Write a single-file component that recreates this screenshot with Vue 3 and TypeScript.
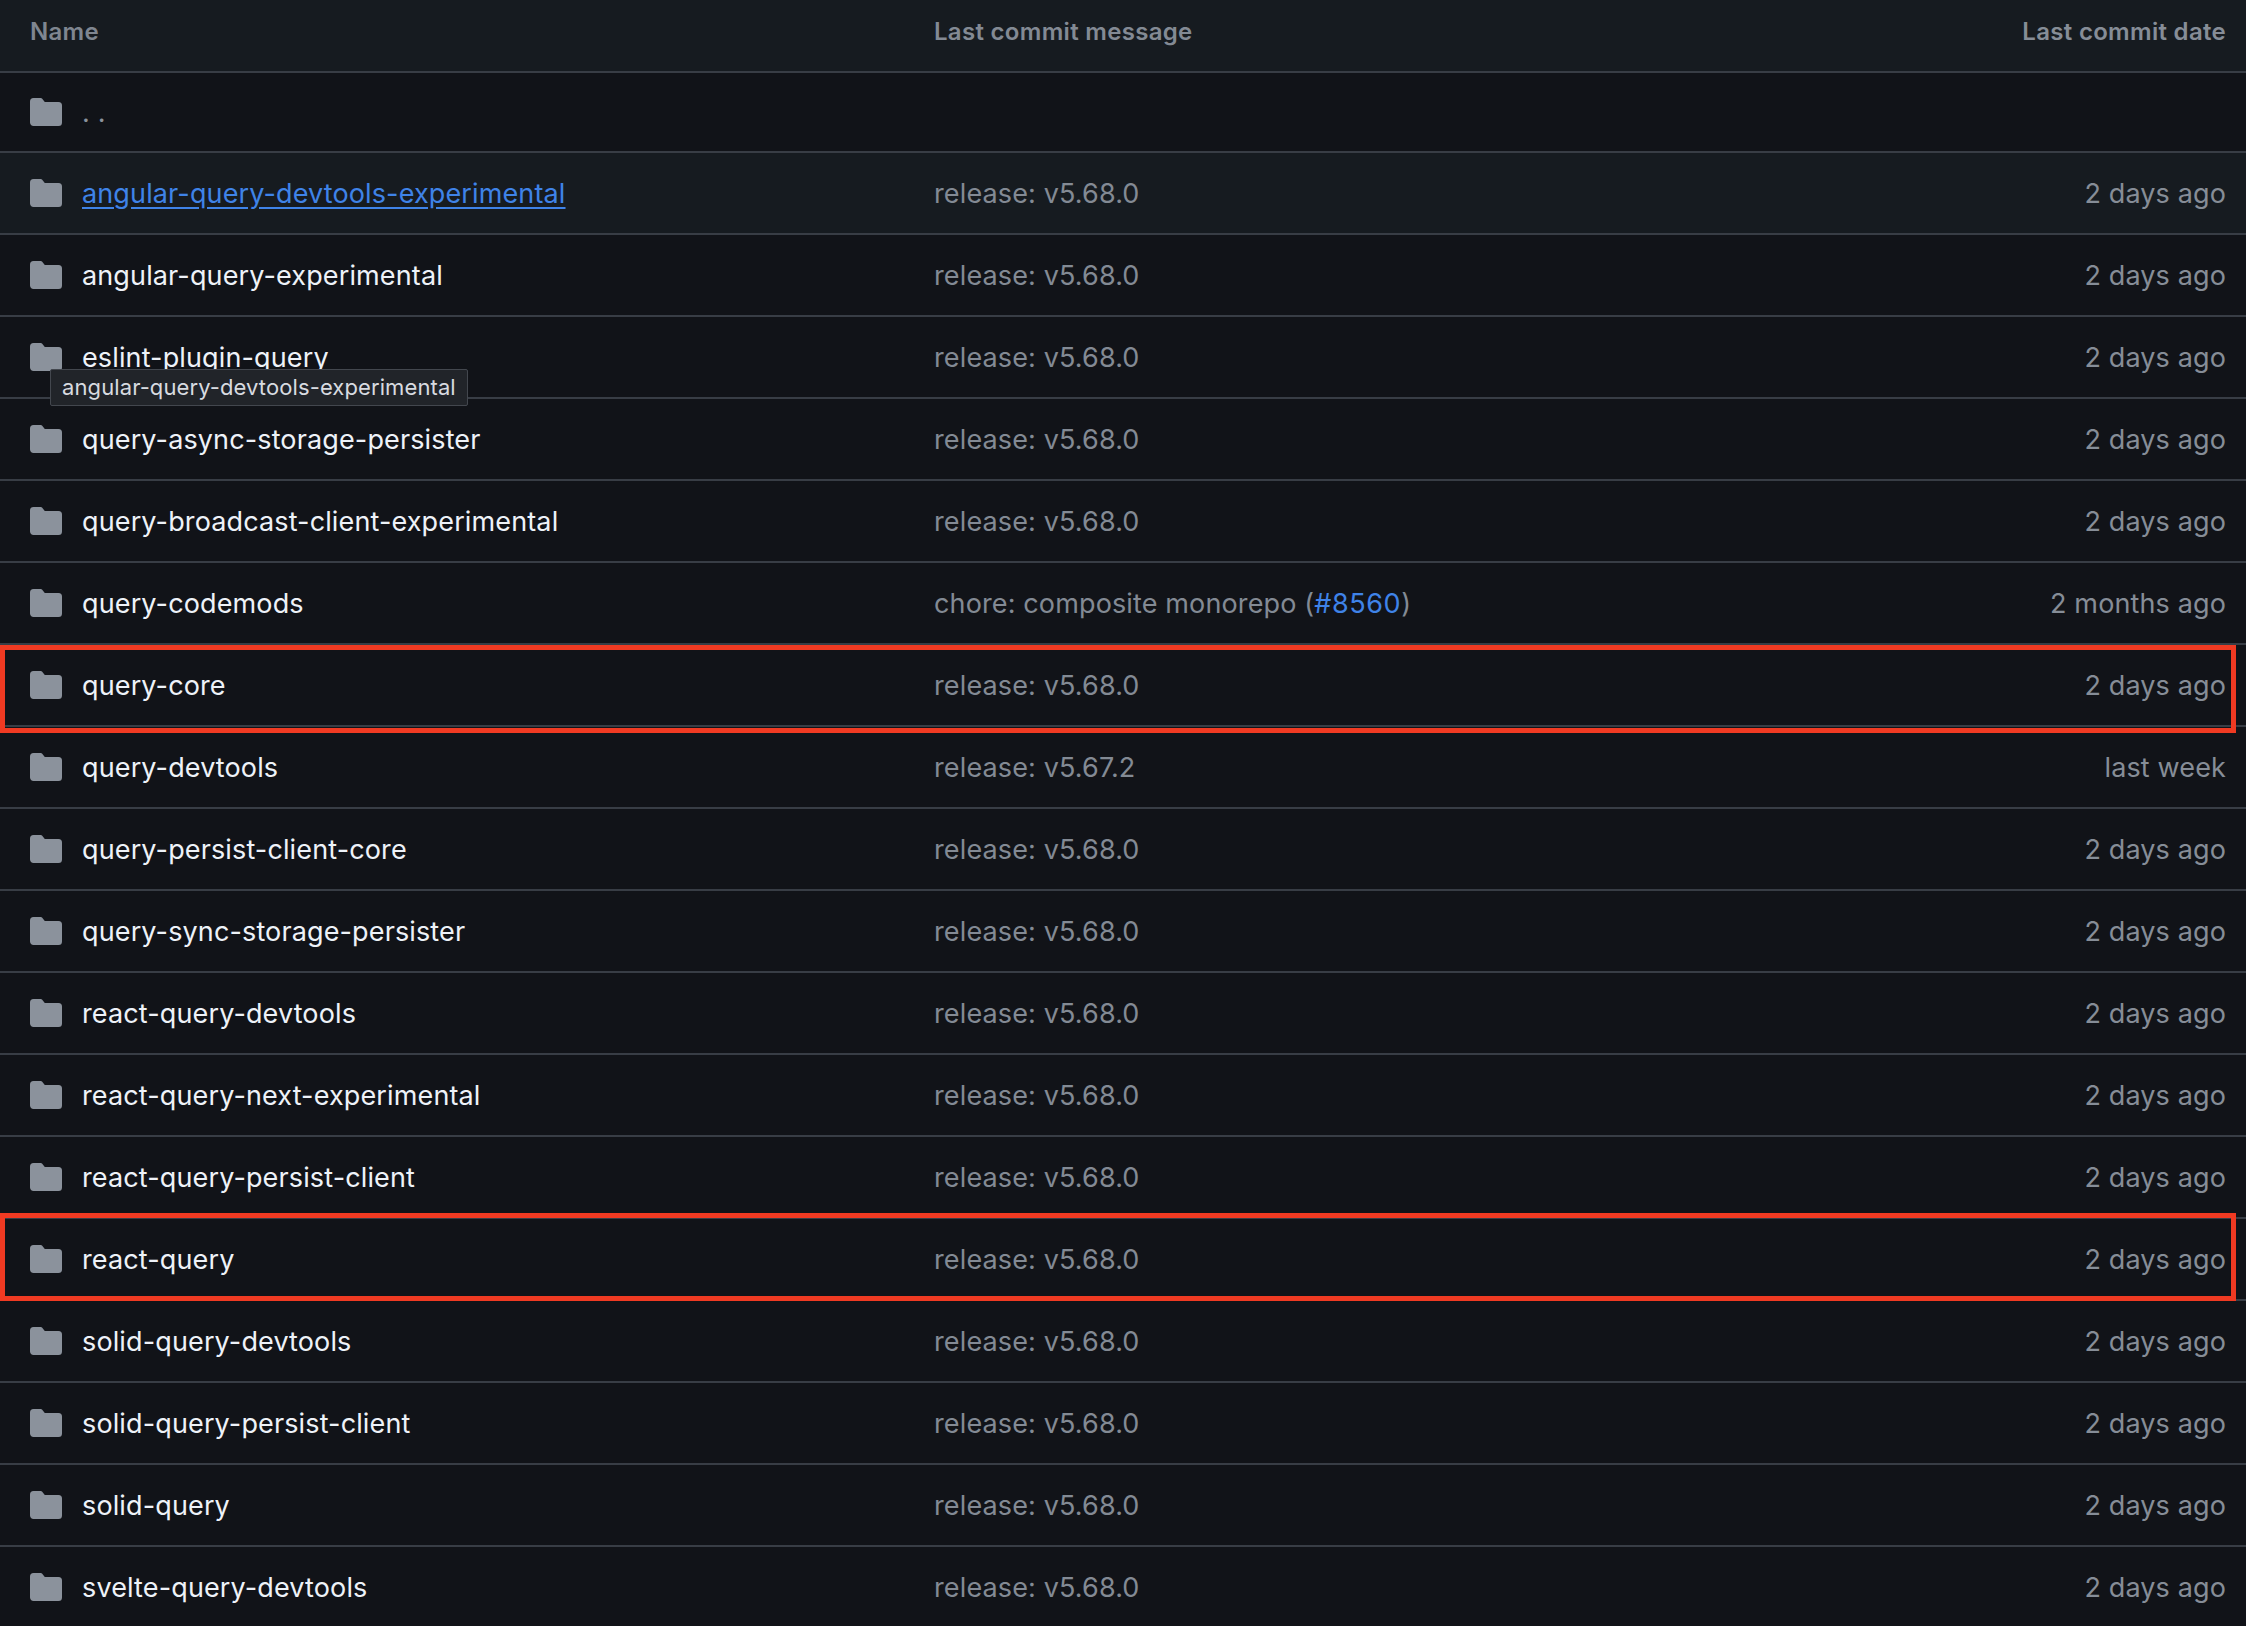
<script setup lang="ts">
interface Row {
  name: string;
  message?: string;
  issue?: string;
  date?: string;
  hovered?: boolean;
  marked?: boolean;
  markedUp?: boolean;
}

const release = 'release: v5.68.0';
const recent = '2 days ago';

const rows: Row[] = [
  { name: '. .' },
  { name: 'angular-query-devtools-experimental', message: release, date: recent, hovered: true },
  { name: 'angular-query-experimental', message: release, date: recent },
  { name: 'eslint-plugin-query', message: release, date: recent },
  { name: 'query-async-storage-persister', message: release, date: recent },
  { name: 'query-broadcast-client-experimental', message: release, date: recent },
  { name: 'query-codemods', message: 'chore: composite monorepo (', issue: '#8560', date: '2 months ago' },
  { name: 'query-core', message: release, date: recent, marked: true },
  { name: 'query-devtools', message: 'release: v5.67.2', date: 'last week' },
  { name: 'query-persist-client-core', message: release, date: recent },
  { name: 'query-sync-storage-persister', message: release, date: recent },
  { name: 'react-query-devtools', message: release, date: recent },
  { name: 'react-query-next-experimental', message: release, date: recent },
  { name: 'react-query-persist-client', message: release, date: recent },
  { name: 'react-query', message: release, date: recent, marked: true, markedUp: true },
  { name: 'solid-query-devtools', message: release, date: recent },
  { name: 'solid-query-persist-client', message: release, date: recent },
  { name: 'solid-query', message: release, date: recent },
  { name: 'svelte-query-devtools', message: release, date: recent },
];
</script>

<template>
  <div class="table">
    <div class="head">
      <span class="col-name">Name</span>
      <span class="col-msg">Last commit message</span>
      <span class="col-date">Last commit date</span>
    </div>
    <div
      v-for="(row, i) in rows"
      :key="row.name"
      class="row"
      :class="{ hovered: row.hovered, first: i === 0, marked: row.marked, 'marked-up': row.markedUp }"
    >
      <div class="col-name">
        <svg class="folder" viewBox="0 0 16 16" width="32" height="32">
          <path
            fill="currentColor"
            d="M1.75 1A1.75 1.75 0 0 0 0 2.75v10.5C0 14.216.784 15 1.75 15h12.5A1.75 1.75 0 0 0 16 13.25v-8.5A1.75 1.75 0 0 0 14.25 3H7.5a.25.25 0 0 1-.2-.1l-.9-1.2C6.07 1.26 5.55 1 5 1H1.75Z"
          />
        </svg>
        <a class="file" :class="{ up: i === 0 }">{{ row.name }}</a>
        <span v-if="row.name === 'eslint-plugin-query'" class="tip">angular-query-devtools-experimental</span>
      </div>
      <div class="col-msg">
        {{ row.message }}<template v-if="row.issue"><a class="issue">{{ row.issue }}</a>)</template>
      </div>
      <div class="col-date">{{ row.date }}</div>
    </div>
  </div>
</template>

<style>
html,
body {
  background: #111318;
}
</style>

<style scoped>
.table {
  width: 2246px;
  height: 1626px;
  overflow: hidden;
  background: #111318;
  font-family: Inter, "Noto Sans", sans-serif;
  font-size: 27px;
  letter-spacing: 0.13px;
  color: #eef2f8;
}

.head,
.row {
  display: grid;
  grid-template-columns: 904px 1fr auto;
  align-items: center;
  padding-left: 30px;
  padding-right: 20px;
  border-bottom: 2px solid #383d45;
  box-sizing: border-box;
}

.head {
  height: 73px;
  padding-bottom: 9px;
  background: #161b20;
  font-size: 24px;
  letter-spacing: 0.3px;
  font-weight: 600;
  color: #7f8690;
}

.row {
  position: relative;
  height: 82px;
}

.row.first {
  height: 80px;
}

.row.hovered {
  background: #161b20;
}

/* annotation box drawn over the row */
.row.marked::after {
  content: "";
  position: absolute;
  left: 0;
  top: 0;
  width: 2236px;
  height: 88px;
  border: 5px solid #f03a22;
  box-sizing: border-box;
  pointer-events: none;
  z-index: 1;
}

.row.marked-up::after {
  top: -6px;
}

.col-name {
  display: flex;
  align-items: center;
  position: relative;
  gap: 20px;
}

.folder {
  color: #8b929c;
  flex: none;
}

.file {
  color: #eef2f8;
}

.file.up {
  color: #8b929c;
}

.hovered .file {
  color: #3f83e8;
  text-decoration: underline;
  text-underline-offset: 4px;
}

.col-msg {
  color: #838a94;
}

.issue {
  color: #3f83e8;
  letter-spacing: 0.6px;
}

.col-date {
  color: #868d97;
  text-align: right;
}

.tip {
  position: absolute;
  left: 20px;
  top: 28px;
  z-index: 2;
  padding: 4px 11px 5px;
  background: #212429;
  border: 1px solid #43474e;
  border-radius: 2px;
  font-size: 22px;
  letter-spacing: 0.1px;
  color: #d8dbe0;
  white-space: nowrap;
}
</style>
